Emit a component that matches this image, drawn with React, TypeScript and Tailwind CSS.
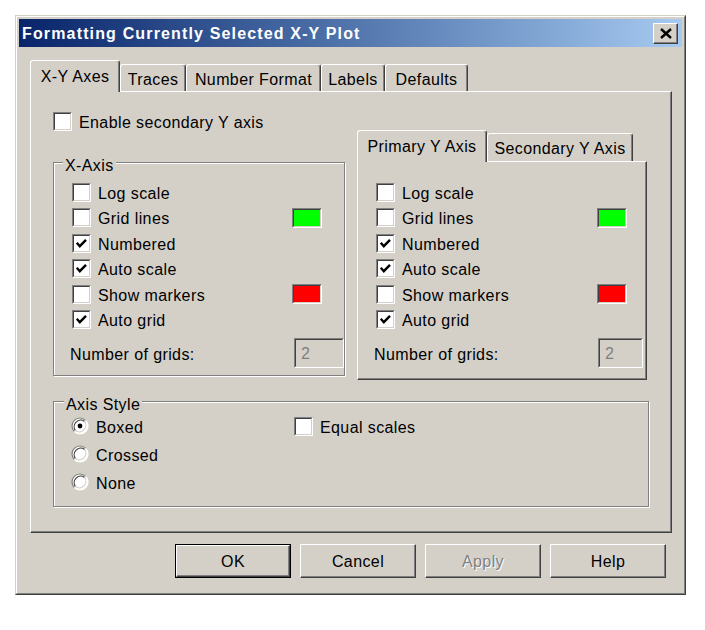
import React from "react";

function CheckBox({ checked }: { checked?: boolean }) {
  return (
    <div className="w-[19px] h-[19px] shrink-0 border border-t-[#808080] border-l-[#808080] border-r-white border-b-white">
      <div className="w-full h-full bg-white border border-t-[#404040] border-l-[#404040] border-r-[#d4d0c8] border-b-[#d4d0c8] flex items-center justify-center">
        {checked && (
          <svg width="13" height="13" viewBox="0 0 13 13">
            <path d="M1.8 5.8 L4.8 9.2 L11 2.8" fill="none" stroke="#000" strokeWidth="2.4" />
          </svg>
        )}
      </div>
    </div>
  );
}

function Radio({ selected }: { selected?: boolean }) {
  return (
    <svg width="18" height="18" viewBox="0 0 18 18" className="shrink-0">
      <circle cx="9" cy="9" r="8" fill="#fff" />
      <path d="M3.34 14.66 A8 8 0 0 1 14.66 3.34" stroke="#808080" strokeWidth="1.2" fill="none" />
      <path d="M14.66 3.34 A8 8 0 0 1 3.34 14.66" stroke="#ffffff" strokeWidth="1.2" fill="none" />
      <path d="M4.4 13.6 A6.6 6.6 0 0 1 13.6 4.4" stroke="#404040" strokeWidth="1.2" fill="none" />
      <path d="M13.6 4.4 A6.6 6.6 0 0 1 4.4 13.6" stroke="#d4d0c8" strokeWidth="1.2" fill="none" />
      {selected && <circle cx="9" cy="9" r="2.4" fill="#000" />}
    </svg>
  );
}

function Swatch({ color, className }: { color: string; className: string }) {
  return (
    <div className={"w-[30px] h-[20px] border border-t-[#808080] border-l-[#808080] border-r-white border-b-white " + className}>
      <div
        className="w-full h-full border border-t-[#404040] border-l-[#404040] border-r-[#d4d0c8] border-b-[#d4d0c8]"
        style={{ backgroundColor: color }}
      />
    </div>
  );
}

function Label({ children, className }: { children: React.ReactNode; className?: string }) {
  return <span className={"pt-[3px] leading-[18px] " + (className ?? "")}>{children}</span>;
}

function CheckRow({
  label,
  checked,
  h,
  swatch,
  swatchMr,
}: {
  label: string;
  checked?: boolean;
  h: string;
  swatch?: string;
  swatchMr?: string;
}) {
  return (
    <div className={"flex items-center " + h}>
      <CheckBox checked={checked} />
      <Label className="ml-[7px]">{label}</Label>
      {swatch && <Swatch color={swatch} className={"ml-auto " + (swatchMr ?? "")} />}
    </div>
  );
}

function NumInput({ w, mr }: { w: string; mr: string }) {
  return (
    <div className={"ml-auto h-[30px] border border-t-[#808080] border-l-[#808080] border-r-white border-b-white " + w + " " + mr}>
      <div className="w-full h-full border border-t-[#404040] border-l-[#404040] border-r-[#d4d0c8] border-b-[#d4d0c8] flex items-center pl-[5px] pt-[2px] text-[#808080]">
        2
      </div>
    </div>
  );
}

function AxisRows({ swatchMr, inputW, inputMr }: { swatchMr: string; inputW: string; inputMr: string }) {
  return (
    <div className="flex flex-col">
      <CheckRow label="Log scale" h="h-[26px]" />
      <CheckRow label="Grid lines" h="h-[25px]" swatch="#00ff00" swatchMr={swatchMr} />
      <CheckRow label="Numbered" checked h="h-[26px]" />
      <CheckRow label="Auto scale" checked h="h-[25px]" />
      <CheckRow label="Show markers" h="h-[26px]" swatch="#ff0000" swatchMr={swatchMr} />
      <CheckRow label="Auto grid" checked h="h-[25px]" />
      <div className="mt-[6px] h-[30px] flex items-center ml-[-2px]">
        <Label>Number of grids:</Label>
        <NumInput w={inputW} mr={inputMr} />
      </div>
    </div>
  );
}

const raised =
  "border border-t-white border-l-white border-r-[#404040] border-b-[#404040] shadow-[inset_-1px_-1px_0_#808080]";

function Tab({ label, w, selected }: { label: string; w: string; selected?: boolean }) {
  if (selected) {
    return (
      <div
        className={
          "relative z-10 mb-[-1px] h-[32px] bg-[#d4d0c8] rounded-t-[3px] border-t border-l border-r border-t-white border-l-white border-r-[#404040] shadow-[inset_-1px_0_0_#808080] flex items-center justify-center pt-[1px] " +
          w
        }
      >
        {label}
      </div>
    );
  }
  return (
    <div
      className={
        "h-[27px] bg-[#d4d0c8] rounded-t-[3px] border-t border-l border-r border-t-white border-l-white border-r-[#404040] shadow-[inset_-1px_0_0_#808080] flex items-center justify-center pt-[3px] " +
        w
      }
    >
      {label}
    </div>
  );
}

const etched = "border border-[#808080] shadow-[inset_1px_1px_0_#fff,1px_1px_0_#fff]";

function Button({ label, def, disabled }: { label: string; def?: boolean; disabled?: boolean }) {
  const inner = (
    <div
      className={
        "w-full h-full flex items-center justify-center pt-[1px] bg-[#d4d0c8] " +
        raised +
        (disabled ? " text-[#808080] [text-shadow:1px_1px_0_#fff]" : "")
      }
    >
      {label}
    </div>
  );
  if (def) {
    return <div className="w-[116px] h-[34px] border border-black">{inner}</div>;
  }
  return <div className="w-[116px] h-[34px]">{inner}</div>;
}

export default function App() {
  return (
    <div className="w-[705px] h-[630px] bg-white pt-[15px] pl-[15px] font-['Liberation_Sans',Arial,sans-serif] text-[16px] tracking-[0.4px] text-black">
      <div className="w-[671px] h-[580px] border border-t-[#d4d0c8] border-l-[#d4d0c8] border-r-[#404040] border-b-[#404040]">
        <div className="h-full border border-t-white border-l-white border-r-[#808080] border-b-[#808080] bg-[#d4d0c8] p-[2px] flex flex-col">
          {/* Title bar */}
          <div className="h-[28px] shrink-0 bg-linear-to-r from-[#0a246a] to-[#a6caf0] flex items-center justify-between pl-[3px] pr-[4px]">
            <span className="text-white font-bold leading-[18px] tracking-[1.15px] pt-[2px]">
              Formatting Currently Selected X-Y Plot
            </span>
            <div className={"w-[25px] h-[21px] bg-[#d4d0c8] flex items-center justify-center " + raised}>
              <svg width="14" height="11" viewBox="0 0 14 11">
                <path d="M2 1 L12 10 M12 1 L2 10" stroke="#000" strokeWidth="2.4" />
              </svg>
            </div>
          </div>

          {/* Tab strip */}
          <div className="mt-[13px] ml-[11px] h-[31px] flex items-end">
            <Tab label="X-Y Axes" w="w-[90px]" selected />
            <Tab label="Traces" w="w-[66px]" />
            <Tab label="Number Format" w="w-[135px]" />
            <Tab label="Labels" w="w-[64px]" />
            <Tab label="Defaults" w="w-[83px]" />
          </div>

          {/* Tab panel */}
          <div className={"ml-[11px] w-[642px] h-[442px] " + raised}>
            <div className="ml-[22px] mt-[20px] h-[19px] flex items-center">
              <CheckBox />
              <Label className="ml-[7px]">Enable secondary Y axis</Label>
            </div>

            <div className="mt-[-1px] ml-[22px] flex items-start">
              {/* X-Axis group */}
              <div className={"relative mt-[32px] w-[292px] h-[214px] pt-[16px] pl-[18px] " + etched}>
                <span className="absolute left-[9px] top-[-6px] px-[2px] bg-[#d4d0c8] leading-[18px]">X-Axis</span>
                <AxisRows swatchMr="mr-[22px]" inputW="w-[50px]" inputMr="mr-0" />
              </div>

              {/* Y axis tab control */}
              <div className="ml-[12px] w-[290px]">
                <div className="h-[31px] flex items-end">
                  <Tab label="Primary Y Axis" w="w-[130px]" selected />
                  <div className="h-[28px] w-[146px] bg-[#d4d0c8] rounded-t-[3px] border-t border-l border-r border-t-white border-l-white border-r-[#404040] shadow-[inset_-1px_0_0_#808080] flex items-center justify-center pt-[3px]">
                    Secondary Y Axis
                  </div>
                </div>
                <div className={"h-[219px] pt-[17px] pl-[18px] " + raised}>
                  <AxisRows swatchMr="mr-[19px]" inputW="w-[45px]" inputMr="mr-[3px]" />
                </div>
              </div>
            </div>

            {/* Axis Style */}
            <div className={"relative ml-[22px] mt-[21px] w-[596px] h-[106px] pt-[10px] pl-[17px] " + etched}>
              <span className="absolute left-[10px] top-[-6px] px-[2px] bg-[#d4d0c8] leading-[18px]">Axis Style</span>
              <div className="grid grid-cols-[223px_1fr]">
                <div className="flex flex-col">
                  <div className="h-[28px] flex items-center">
                    <Radio selected />
                    <Label className="ml-[7px]">Boxed</Label>
                  </div>
                  <div className="h-[28px] flex items-center">
                    <Radio />
                    <Label className="ml-[7px]">Crossed</Label>
                  </div>
                  <div className="h-[28px] flex items-center">
                    <Radio />
                    <Label className="ml-[7px]">None</Label>
                  </div>
                </div>
                <div className="flex flex-col">
                  <div className="h-[28px] flex items-center">
                    <CheckBox />
                    <Label className="ml-[7px]">Equal scales</Label>
                  </div>
                </div>
              </div>
            </div>
          </div>

          {/* Buttons */}
          <div className="mt-[11px] flex justify-end gap-[9px] pr-[16px]">
            <Button label="OK" def />
            <Button label="Cancel" />
            <Button label="Apply" disabled />
            <Button label="Help" />
          </div>
        </div>
      </div>
    </div>
  );
}
